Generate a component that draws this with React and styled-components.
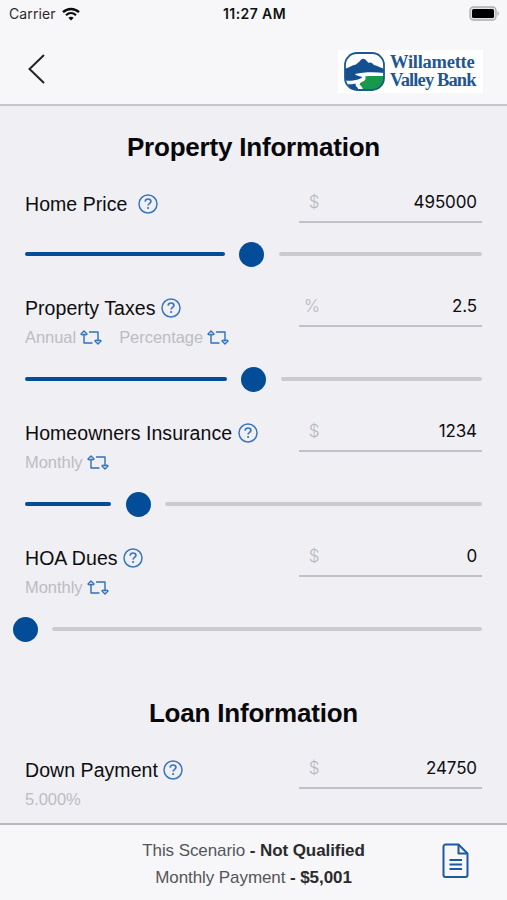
import styled, { createGlobalStyle } from "styled-components";

const GlobalStyle = createGlobalStyle`
  * {
    box-sizing: border-box;
  }

  body {
    margin: 0;
    background: #efeff4;
    font-family: "Liberation Sans", Arial, sans-serif;
    color: #0d0d0f;
  }
`;

const Screen = styled.div`
  width: 507px;
  height: 900px;
  display: flex;
  flex-direction: column;
  overflow: hidden;
`;

const Header = styled.header`
  height: 106px;
  flex: none;
  background: #f7f7f9;
  border-bottom: 2px solid #c6c6c9;
`;

const StatusBar = styled.div`
  height: 27px;
  padding: 0 7px 0 9px;
  display: grid;
  grid-template-columns: 1fr auto 1fr;
  align-items: center;
  font-family: Inter, sans-serif;
  font-size: 14px;
  color: #2a2a2d;
`;

const Carrier = styled.div`
  display: flex;
  align-items: center;
  gap: 6px;
  letter-spacing: 0.1px;
`;

const Clock = styled.div`
  font-weight: 600;
  color: #111;
  letter-spacing: 0.4px;
`;

const Battery = styled.svg`
  justify-self: end;
`;

const NavBar = styled.div`
  height: 77px;
  padding: 6px 24px 0 27px;
  display: flex;
  align-items: center;
  justify-content: space-between;
`;

const BackButton = styled.button`
  padding: 0;
  border: none;
  background: none;
  display: flex;
  cursor: pointer;
`;

const Logo = styled.div`
  width: 145px;
  height: 43px;
  margin-top: 5px;
  padding-left: 6px;
  display: flex;
  align-items: center;
  gap: 5px;
  background: white;

  svg {
    flex: none;
  }
`;

const LogoText = styled.div`
  width: 86px;
  font-family: "Liberation Serif", serif;
  font-weight: bold;
  font-size: 18.5px;
  white-space: nowrap;
  color: #1d5794;
`;

const LogoLine = styled.div`
  height: 18px;
  line-height: 18px;
  letter-spacing: ${(props) => props.$spacing};
`;

const Content = styled.main`
  flex: 1;
  min-height: 0;
  padding: 0 25px;
  overflow: hidden;
`;

const SectionTitle = styled.h2`
  margin: 0;
  height: ${(props) => (props.$first ? "80px" : "87px")};
  padding-top: ${(props) => (props.$first ? "26px" : "33px")};
  font-size: 26px;
  line-height: 30px;
  font-weight: bold;
  letter-spacing: -0.2px;
  text-align: center;
  color: #08080a;
`;

const Field = styled.section`
  margin-bottom: 23px;
`;

const FieldHead = styled.div`
  height: ${(props) => (props.$tall ? "76px" : "55px")};
  display: flex;
  justify-content: space-between;
  align-items: flex-start;
`;

const Label = styled.div`
  height: 29px;
  margin-top: 4px;
  display: flex;
  align-items: center;
  gap: ${(props) => props.$gap || 5.5}px;
  font-size: 19.5px;
  letter-spacing: 0.06px;
  white-space: nowrap;

  svg {
    margin-bottom: 2px;
  }
`;

const Options = styled.div`
  height: 28px;
  display: flex;
  align-items: center;
  gap: 17px;
`;

const Option = styled.div`
  display: flex;
  align-items: center;
  gap: 4px;
  font-size: 16.5px;
  letter-spacing: -0.04px;
  color: #bcbdc2;
`;

const InputBox = styled.div`
  width: 183px;
  height: 37px;
  padding: 0 5px;
  padding-bottom: 4px;
  display: flex;
  align-items: center;
  border-bottom: 2px solid #bfc2c8;
  font-family: Inter, sans-serif;
  font-size: 17px;
`;

const Unit = styled.span`
  width: ${(props) => (props.$wide ? "16px" : "20px")};
  text-align: center;
  flex: none;
  font-weight: 300;
  color: #b4b8be;
`;

const Value = styled.span`
  flex: 1;
  text-align: right;
  letter-spacing: -0.1px;
`;

const Slider = styled.div`
  height: 26px;
  display: flex;
  align-items: center;
`;

const Fill = styled.div`
  width: calc(${(props) => props.$percent}% - 27px);
  margin-right: calc(min(0px, ${(props) => props.$percent}% - 27px) + 14.5px);
  height: 4px;
  flex: none;
  border-radius: 2px;
  background: #034c97;
`;

const Thumb = styled.div`
  width: 25px;
  height: 25px;
  flex: none;
  border-radius: 50%;
  background: #034c97;
`;

const Rest = styled.div`
  flex: 1;
  height: 4px;
  margin-left: 14.5px;
  border-radius: 2px;
  background: #cbcbce;
`;

const Footer = styled.footer`
  height: 77px;
  flex: none;
  padding: 2px 38px 0 65px;
  display: grid;
  grid-template-columns: 1fr 27px;
  align-items: center;
  background: #f7f7f9;
  border-top: 2px solid #b9b9bd;

  svg {
    margin-bottom: 6px;
  }
`;

const Summary = styled.div`
  text-align: center;
  font-size: 17px;
  line-height: 27px;
  letter-spacing: -0.08px;
  color: #55555a;

  b {
    color: #2b2b2e;
  }
`;

const HelpIcon = () => (
  <svg width="20" height="20" viewBox="0 0 20 20" fill="none" stroke="#3a75bd">
    <circle cx="10" cy="10" r="9" strokeWidth="1.5" />
    <path
      d="M7.1 7.6C7.3 5.9 8.4 5 10 5c1.7 0 2.9 1 2.9 2.4 0 1.9-2.8 2-2.8 4.2"
      strokeWidth="1.7"
    />
    <circle cx="10.1" cy="14" r="1.1" fill="#3a75bd" stroke="none" />
  </svg>
);

const SwapIcon = () => (
  <svg
    width="22"
    height="15"
    viewBox="0 0 22 15"
    fill="none"
    stroke="#2f70b8"
    strokeWidth="1.4"
    strokeLinejoin="round"
    strokeLinecap="round"
  >
    <path d="M4 5v8h8" />
    <path d="M1 4L4 1l3 3c-.8 1.200-2 1-3 .2-1 .8-2.200 1-3-.2z" />
    <path d="M9.500 2H18v8" />
    <path d="M15 11l3 3 3-3c-.8-1.200-2-1-3-.2-1-.8-2.200-1-3 .2z" />
  </svg>
);

const WifiIcon = () => (
  <svg width="18" height="14" viewBox="0 0 18 14" fill="none" stroke="#0b0b0b">
    <path d="M1 5.2C5.6.9 12.4.9 17 5.2" strokeWidth="2.4" />
    <path d="M4 8.2c3-2.7 7-2.7 10 0" strokeWidth="2.2" />
    <path
      d="M6.3 10.7c1.7-1.4 3.7-1.4 5.4 0L9 13.5z"
      fill="#0b0b0b"
      stroke="none"
    />
  </svg>
);

const BankMark = () => (
  <svg width="41" height="39" viewBox="0 0 41 39">
    <defs>
      <clipPath id="mark">
        <rect x="1" y="1" width="39" height="37" rx="12" />
      </clipPath>
    </defs>
    <g clipPath="url(#mark)">
      <rect width="41" height="39" fill="white" />
      <path
        d="M0 17c5-1 7-3 10-4 2 0 3-2 5-3 2-2 3-4 5-3 2 0 3 3 5 4 2-1 3 0 5 2 4 1 6 3 11 4v4c-10-1.200-22-1-30 1 1 2 6 2 7 3 0 2-6 3-9 3.500-3 .5-6 .5-9-.5z"
        fill="#14508f"
      />
      <path
        d="M41 24H27c-3 0-4 0-6 .5 1 1.500 1 3-1 4.500-3 1.500-5 2-4 4 1 1 3 2 3 6h22z"
        fill="#16994c"
      />
      <path
        d="M4 32c3 .5 6 0 8-.5-1 1.500 0 3 1.500 4L15 39H8z"
        fill="#14508f"
      />
    </g>
    <rect
      x="1"
      y="1"
      width="39"
      height="37"
      rx="12"
      fill="none"
      stroke="#1d5794"
      strokeWidth="1.8"
    />
  </svg>
);

const DocumentIcon = () => (
  <svg
    width="27"
    height="36"
    viewBox="0 0 27 36"
    fill="none"
    stroke="#1d59a3"
    strokeWidth="2"
    strokeLinejoin="round"
  >
    <path d="M3.500 1.500h13L25.500 10.500v21.500a2 2 0 0 1-2 2h-20a2 2 0 0 1-2-2V3.500a2 2 0 0 1 2-2z" />
    <path d="M16.500 1.500v9h9" />
    <path d="M7.500 17h12.500M7.500 21.500h12.500M7.500 26h12.500" />
  </svg>
);

const fields = [
  {
    label: "Home Price",
    gap: 11,
    unit: "$",
    value: "495000",
    percent: 49.6,
  },
  {
    label: "Property Taxes",
    unit: "%",
    value: "2.5",
    options: ["Annual", "Percentage"],
    percent: 50.1,
  },
  {
    label: "Homeowners Insurance",
    unit: "$",
    value: "1234",
    options: ["Monthly"],
    percent: 24.8,
  },
  {
    label: "HOA Dues",
    unit: "$",
    value: "0",
    options: ["Monthly"],
    percent: 0,
  },
];

const LoanField = ({ field }) => (
  <Field>
    <FieldHead $tall={Boolean(field.options || field.note)}>
      <div>
        <Label $gap={field.gap}>
          {field.label} <HelpIcon />
        </Label>
        {field.options && (
          <Options>
            {field.options.map((option) => (
              <Option key={option}>
                {option} <SwapIcon />
              </Option>
            ))}
          </Options>
        )}
        {field.note && (
          <Options>
            <Option>{field.note}</Option>
          </Options>
        )}
      </div>
      <InputBox>
        <Unit $wide={field.unit === "%"}>{field.unit}</Unit>
        <Value>{field.value}</Value>
      </InputBox>
    </FieldHead>
    {field.percent !== undefined && (
      <Slider>
        <Fill $percent={field.percent} />
        <Thumb />
        <Rest />
      </Slider>
    )}
  </Field>
);

const App = () => {
  return (
    <Screen>
      <GlobalStyle />
      <Header>
        <StatusBar>
          <Carrier>
            Carrier <WifiIcon />
          </Carrier>
          <Clock>11:27 AM</Clock>
          <Battery width="31" height="15" viewBox="0 0 31 15">
            <rect
              x="1"
              y="1"
              width="26"
              height="13"
              rx="3.500"
              fill="#e4e4e6"
              stroke="#adadb0"
              strokeWidth="1.3"
            />
            <rect x="3" y="3" width="22" height="9" rx="1.500" fill="#000" />
            <path d="M28.500 5.200c1.800.6 1.800 4 0 4.600z" fill="#adadb0" />
          </Battery>
        </StatusBar>
        <NavBar>
          <BackButton aria-label="Back">
            <svg width="20" height="32" viewBox="0 0 20 32">
              <path
                d="M17 2L2.500 16 17 30"
                fill="none"
                stroke="#222225"
                strokeWidth="2"
              />
            </svg>
          </BackButton>
          <Logo>
            <BankMark />
            <LogoText>
              <LogoLine $spacing="-0.25px">Willamette</LogoLine>
              <LogoLine $spacing="-0.9px">Valley Bank</LogoLine>
            </LogoText>
          </Logo>
        </NavBar>
      </Header>

      <Content>
        <SectionTitle $first>Property Information</SectionTitle>
        {fields.map((field) => (
          <LoanField key={field.label} field={field} />
        ))}
        <SectionTitle>Loan Information</SectionTitle>
        <LoanField
          field={{
            label: "Down Payment",
            unit: "$",
            value: "24750",
            note: "5.000%",
          }}
        />
      </Content>

      <Footer>
        <div>
          <Summary>
            This Scenario <b>- Not Qualified</b>
          </Summary>
          <Summary>
            Monthly Payment <b>- $5,001</b>
          </Summary>
        </div>
        <DocumentIcon />
      </Footer>
    </Screen>
  );
};

export default App;
